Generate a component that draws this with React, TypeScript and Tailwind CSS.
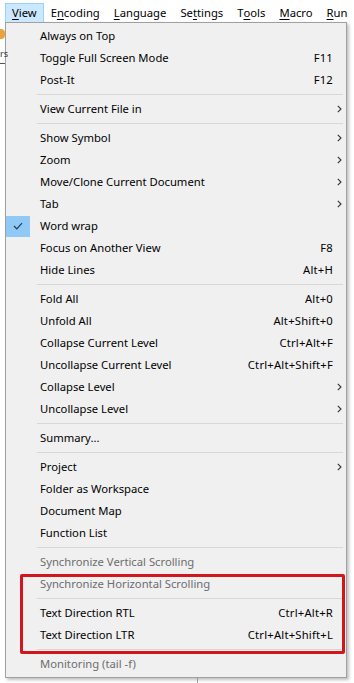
const menuBar = [
  { pre: '', key: 'V', post: 'iew', active: true },
  { pre: 'E', key: 'n', post: 'coding' },
  { pre: '', key: 'L', post: 'anguage' },
  { pre: 'Se', key: 't', post: 'tings' },
  { pre: 'T', key: 'o', post: 'ols' },
  { pre: '', key: 'M', post: 'acro' },
  { pre: '', key: 'R', post: 'un' },
];

type Item =
  | { sep: true }
  | { label: string; shortcut?: string; sub?: boolean; checked?: boolean; disabled?: boolean; sep?: false };

const items: Item[] = [
  { label: 'Always on Top' },
  { label: 'Toggle Full Screen Mode', shortcut: 'F11' },
  { label: 'Post-It', shortcut: 'F12' },
  { sep: true },
  { label: 'View Current File in', sub: true },
  { sep: true },
  { label: 'Show Symbol', sub: true },
  { label: 'Zoom', sub: true },
  { label: 'Move/Clone Current Document', sub: true },
  { label: 'Tab', sub: true },
  { label: 'Word wrap', checked: true },
  { label: 'Focus on Another View', shortcut: 'F8' },
  { label: 'Hide Lines', shortcut: 'Alt+H' },
  { sep: true },
  { label: 'Fold All', shortcut: 'Alt+0' },
  { label: 'Unfold All', shortcut: 'Alt+Shift+0' },
  { label: 'Collapse Current Level', shortcut: 'Ctrl+Alt+F' },
  { label: 'Uncollapse Current Level', shortcut: 'Ctrl+Alt+Shift+F' },
  { label: 'Collapse Level', sub: true },
  { label: 'Uncollapse Level', sub: true },
  { sep: true },
  { label: 'Summary...' },
  { sep: true },
  { label: 'Project', sub: true },
  { label: 'Folder as Workspace' },
  { label: 'Document Map' },
  { label: 'Function List' },
  { sep: true },
  { label: 'Synchronize Vertical Scrolling', disabled: true },
  { label: 'Synchronize Horizontal Scrolling', disabled: true },
  { sep: true },
  { label: 'Text Direction RTL', shortcut: 'Ctrl+Alt+R' },
  { label: 'Text Direction LTR', shortcut: 'Ctrl+Alt+Shift+L' },
  { sep: true },
  { label: 'Monitoring (tail -f)', disabled: true },
];

function Chevron() {
  return (
    <svg width="5" height="8" viewBox="0 0 5 8" className="text-[#333]">
      <path d="M0.8 0.8 L4 4 L0.8 7.2" fill="none" stroke="currentColor" strokeWidth="1.1" />
    </svg>
  );
}

export default function App() {
  return (
    <div
      className="relative w-[354px] h-[683px] bg-white overflow-hidden text-[11.25px] text-black"
      style={{ fontFamily: '"Noto Sans", "Open Sans", sans-serif' }}
    >
      {/* menu bar */}
      <div className="flex h-[22px] items-stretch pl-[5px] pt-[3px] bg-white">
        {menuBar.map(m => (
          <div
            key={m.key}
            className={`flex items-center leading-none ${
              m.active ? 'bg-[#cce8ff] border border-b-0 border-[#99d1ff] px-[6px]' : 'px-[7px]'
            }`}
          >
            {m.pre}
            <span className="underline underline-offset-2">{m.key}</span>
            {m.post}
          </div>
        ))}
      </div>

      {/* bits of the window behind the menu */}
      <div className="absolute left-0 top-[29px] w-[5px] h-[10px] rounded-r-sm bg-[#e8a33a]" />
      <div className="absolute left-0 top-[49px] text-[9px] leading-none text-[#333]">rs</div>
      <div className="absolute left-0 top-[63px] w-[5px] h-px bg-[#555]" />
      <div className="absolute left-[197px] top-[677px] w-px h-[6px] bg-[#999]" />

      {/* dropdown */}
      <div className="ml-[5px] w-[342px] bg-[#f0f0f0] border border-[#a0a0a0] pt-[2px] pb-[2px] shadow-[2px_2px_3px_rgba(0,0,0,0.25)]">
        {items.map((it, i) =>
          it.sep ? (
            <div key={i} className="h-[7px] flex items-center pl-[31px] pr-[3px]">
              <div className="h-px w-full bg-[#d7d7d7]" />
            </div>
          ) : (
            <div key={i} className="h-[22px] flex items-center">
              <div className="w-[24px] h-[21px] flex items-center justify-center">
                {it.checked && (
                  <div className="w-[24px] h-[21px] bg-[#90c8f6] flex items-center justify-center">
                    <svg width="10" height="8" viewBox="0 0 10 8">
                      <path d="M1 4 L3.8 6.8 L9 1.2" fill="none" stroke="#1e3b58" strokeWidth="1.2" />
                    </svg>
                  </div>
                )}
              </div>
              <div className={`flex-1 pl-[10px] whitespace-nowrap ${it.disabled ? 'text-[#6d6d6d]' : ''}`}>
                {it.label}
              </div>
              {it.shortcut && <div className="whitespace-nowrap tracking-[0.2px]">{it.shortcut}</div>}
              <div className="w-[13px] flex items-center justify-center">{it.sub && <Chevron />}</div>
            </div>
          )
        )}
      </div>

      {/* annotation box */}
      <div className="absolute left-[20px] top-[574px] w-[325px] h-[80px] border-[3px] border-[#d3151c] rounded-[2px]" />
    </div>
  );
}
